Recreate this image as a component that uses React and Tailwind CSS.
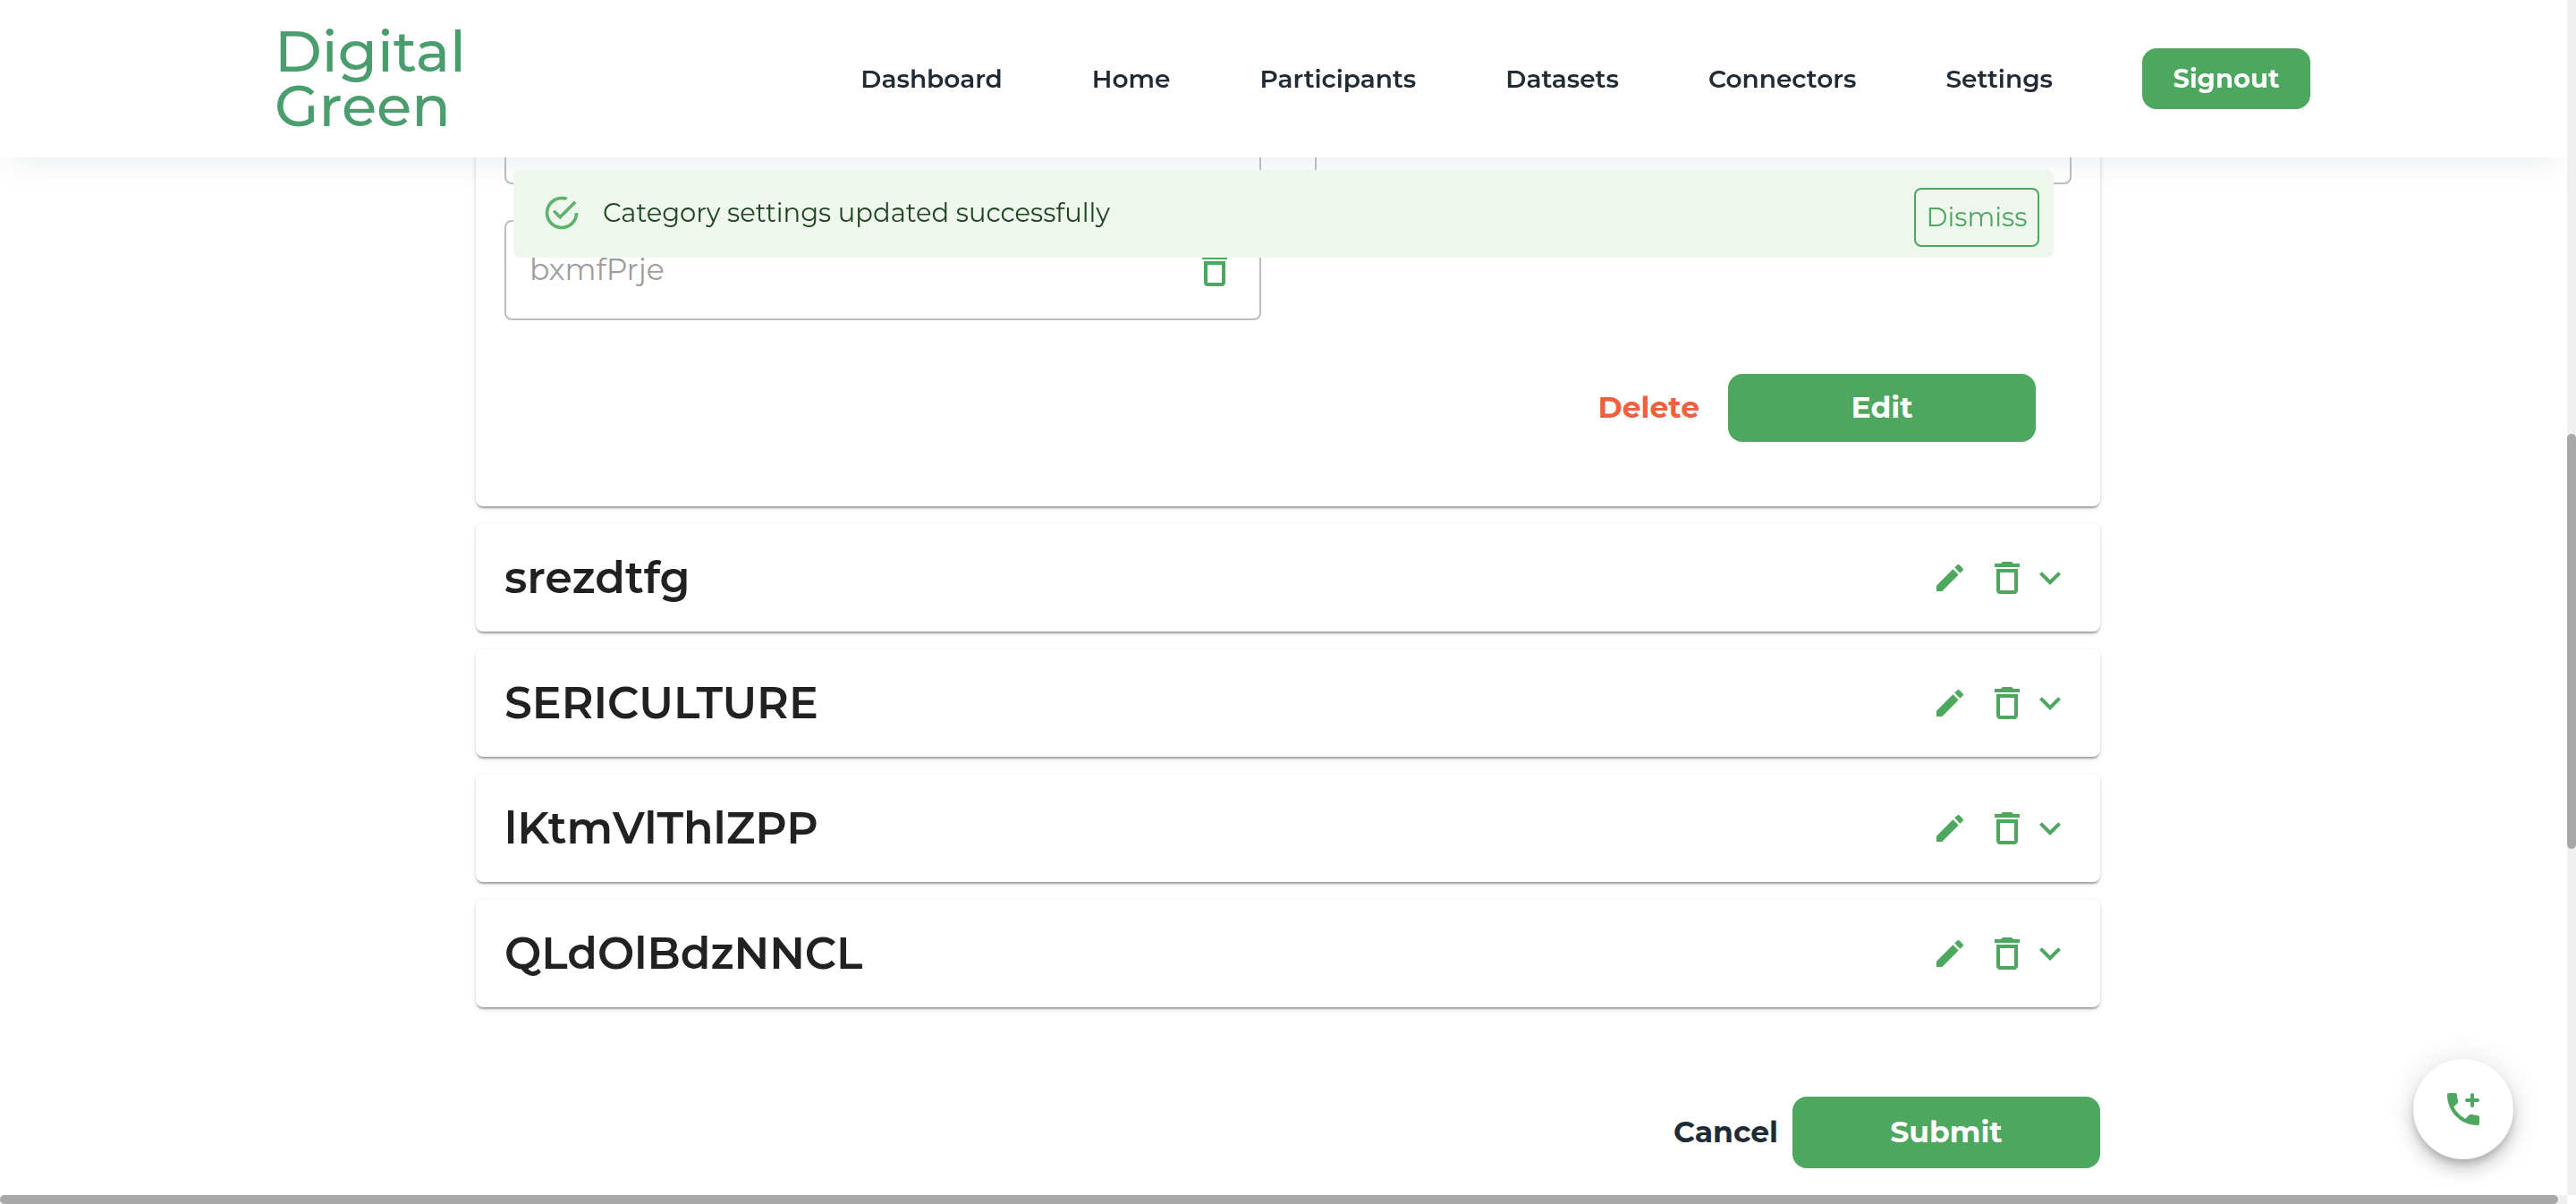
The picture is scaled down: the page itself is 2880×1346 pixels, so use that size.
import { MdEdit, MdDeleteOutline, MdExpandMore } from "react-icons/md";

const NAV_LINKS = ["Dashboard", "Home", "Participants", "Datasets", "Connectors", "Settings"];
const CATEGORIES = ["srezdtfg", "SERICULTURE", "lKtmVlThlZPP", "QLdOlBdzNNCL"];
const CARD =
  "rounded-lg bg-white shadow-[0_4px_2px_-2px_rgba(0,0,0,0.2),0_2px_2px_0_rgba(0,0,0,0.14),0_2px_6px_0_rgba(0,0,0,0.12)]";

function Logo() {
  return (
    <a
      href="#home"
      aria-label="Digital Green"
      className="flex flex-col pl-5 text-[64px] leading-[61px] font-medium text-[#4a9d6c]"
    >
      <span>Digital</span>
      <span>Green</span>
    </a>
  );
}

function Header() {
  return (
    <header className="fixed top-0 right-[10px] left-0 z-20 flex h-44 items-center bg-white shadow-[0_16px_36px_-12px_rgba(145,158,171,0.2)]">
      <div className="mx-auto flex w-4/5 items-center justify-between">
        <Logo />
        <nav className="flex items-center gap-[100px] text-[28px] font-semibold">
          {NAV_LINKS.map((label) => (
            <a key={label} href={`#${label.toLowerCase()}`}>
              {label}
            </a>
          ))}
          <button type="button" className="h-[68px] w-[188px] rounded-2xl bg-[#4da75e] text-[29px] font-bold text-white">
            Signout
          </button>
        </nav>
      </div>
    </header>
  );
}

function SuccessIcon() {
  return (
    <svg viewBox="0 0 24 24" className="size-11 fill-[#5cb36b]" aria-hidden="true">
      <path d="M20,12A8,8 0 0,1 12,20A8,8 0 0,1 4,12A8,8 0 0,1 12,4C12.76,4 13.5,4.11 14.2, 4.31L15.77,2.74C14.61,2.26 13.34,2 12,2A10,10 0 0,0 2,12A10,10 0 0,0 12,22A10,10 0 0, 0 22,12M7.91,10.08L6.5,11.5L11,16L21,6L19.59,4.58L11,13.17L7.91,10.08Z" />
    </svg>
  );
}

function Toast() {
  return (
    <div className="pointer-events-none fixed top-[190px] right-[10px] left-0 z-30">
      <div
        role="alert"
        className="pointer-events-auto mx-auto flex h-[98px] w-3/5 items-start gap-6 rounded-lg bg-[#eff6ee] pr-4 pl-8 text-[29px] leading-[44px] text-[#1e4620]"
      >
        <div className="mt-[26px]">
          <SuccessIcon />
        </div>
        <p className="mt-[26px] grow">Category settings updated successfully</p>
        <button
          type="button"
          className="mt-5 h-[66px] w-[140px] rounded-lg border-2 border-[#4da75e] text-[#4da75e]"
        >
          Dismiss
        </button>
      </div>
    </div>
  );
}

function SubCategoryField({ value }) {
  return (
    <div className="flex h-28 items-center rounded-lg border-2 border-[#bdbdbd] px-[26px]">
      <input
        type="text"
        aria-label="Sub category"
        defaultValue={value}
        disabled
        className="min-w-0 grow bg-transparent text-[33px] text-[#9e9e9e]"
      />
      <button type="button" aria-label="Remove sub category">
        <MdDeleteOutline className="size-12 text-[#4da75e]" />
      </button>
    </div>
  );
}

function OpenCategory() {
  return (
    <section className={`${CARD} px-8 pt-[94px] pb-[72px]`}>
      <div className="grid grid-cols-2 gap-x-[60px] gap-y-10">
        <SubCategoryField value="" />
        <SubCategoryField value="" />
        <SubCategoryField value="bxmfPrje" />
      </div>
      <div className="mt-[60px] mr-10 flex items-center justify-end gap-8 text-[33px] font-bold">
        <button type="button" className="text-[#ee6040]">
          Delete
        </button>
        <button type="button" className="h-[76px] w-[344px] rounded-2xl bg-[#4da75e] text-white">
          Edit
        </button>
      </div>
    </section>
  );
}

function CategoryRow({ name }) {
  return (
    <section className={`${CARD} flex h-[120px] items-center px-8`}>
      <h2 className="grow text-[49px] font-semibold text-[#212121]">{name}</h2>
      <div className="flex items-center text-[#4da75e]">
        <button type="button" aria-label={`Edit ${name}`} className="mr-5">
          <MdEdit className="size-10" />
        </button>
        <button type="button" aria-label={`Delete ${name}`}>
          <MdDeleteOutline className="size-12" />
        </button>
        <button type="button" aria-label={`Expand ${name}`}>
          <MdExpandMore className="size-12" />
        </button>
      </div>
    </section>
  );
}

function CallButton() {
  return (
    <button
      type="button"
      aria-label="Add contact"
      className="fixed right-[70px] bottom-[50px] z-10 flex size-28 items-center justify-center rounded-full bg-white shadow-[0_6px_10px_-2px_rgba(0,0,0,0.2),0_12px_20px_0_rgba(0,0,0,0.14),0_2px_36px_0_rgba(0,0,0,0.12)]"
    >
      <svg viewBox="0 0 24 24" className="size-12 text-[#4da75e]" aria-hidden="true">
        <path
          fill="currentColor"
          d="M20 15.5c-1.25 0-2.45-.2-3.57-.57-.35-.11-.74-.03-1.02.24l-2.2 2.2c-2.83-1.44-5.15-3.75-6.59-6.58l2.2-2.21c.28-.27.36-.66.25-1.01C8.7 6.45 8.5 5.25 8.5 4c0-.55-.45-1-1-1H4c-.55 0-1 .45-1 1 0 9.39 7.61 17 17 17 .55 0 1-.45 1-1v-3.5c0-.55-.45-1-1-1z"
        />
        <path d="M17 4v6M14 7h6" fill="none" stroke="currentColor" strokeWidth="2" strokeLinecap="round" />
      </svg>
    </button>
  );
}

function Scrollbars() {
  return (
    <div aria-hidden="true">
      <div className="fixed top-0 right-0 bottom-[10px] z-40 flex w-[10px] flex-col bg-[#f0f0f0]">
        <div className="grow-[485]" />
        <div className="grow-[464] rounded-full bg-[#a8a8a8]" />
        <div className="grow-[387]" />
      </div>
      <div className="fixed right-[10px] bottom-0 left-0 z-40 bg-[#f0f0f0] pr-[10px]">
        <div className="h-[10px] rounded-full bg-[#a8a8a8]" />
      </div>
    </div>
  );
}

export default function App() {
  return (
    <div className="bg-white font-[Montserrat,Inter,sans-serif] text-[#212b36]">
      <Header />
      <Toast />
      <main className="mx-auto flex w-full max-w-[1816px] flex-col gap-5 pb-10">
        <OpenCategory />
        {CATEGORIES.map((name) => (
          <CategoryRow key={name} name={name} />
        ))}
        <div className="mt-20 flex items-center justify-end gap-4 text-[33px] font-bold">
          <button type="button">Cancel</button>
          <button type="button" className="h-20 w-[344px] rounded-2xl bg-[#4da75e] text-white">
            Submit
          </button>
        </div>
      </main>
      <CallButton />
      <Scrollbars />
    </div>
  );
}
